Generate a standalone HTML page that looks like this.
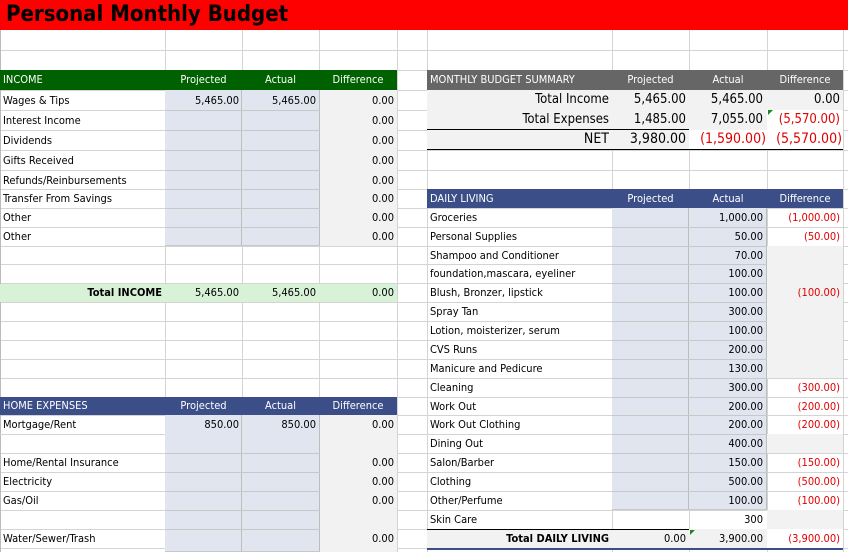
<!DOCTYPE html>
<html><head><meta charset="utf-8"><style>
body{margin:0;width:848px;height:552px;overflow:hidden;background:#fff;font-family:"DejaVu Sans Condensed","Liberation Sans",sans-serif;font-size:11px;color:#000;position:relative}
div{position:absolute;box-sizing:border-box}
.h{height:1px;background:#d4d4d4;left:0;width:848px}
.v{width:1px;background:#d4d4d4}
.t{white-space:nowrap;line-height:19px;height:19px;padding:0 3px}
.r{text-align:right}.c{text-align:center}
.w{color:#fff}
.red{color:#e00000}
.b{background:#e1e5f0;border-right:1px solid #bdbdbd;border-bottom:1px solid #c8c8c8}
.g{background:#f2f2f2}
</style></head><body>
<!-- grid lines -->
<div class="h" style="top:50px"></div><div class="h" style="top:70px"></div><div class="h" style="top:90px"></div><div class="h" style="top:110px"></div><div class="h" style="top:130px"></div><div class="h" style="top:150px"></div><div class="h" style="top:170px"></div><div class="h" style="top:189px"></div><div class="h" style="top:208px"></div><div class="h" style="top:227px"></div><div class="h" style="top:246px"></div><div class="h" style="top:264px"></div><div class="h" style="top:283px"></div><div class="h" style="top:302px"></div><div class="h" style="top:321px"></div><div class="h" style="top:340px"></div><div class="h" style="top:359px"></div><div class="h" style="top:378px"></div><div class="h" style="top:397px"></div><div class="h" style="top:415px"></div><div class="h" style="top:434px"></div><div class="h" style="top:453px"></div><div class="h" style="top:472px"></div><div class="h" style="top:491px"></div><div class="h" style="top:510px"></div><div class="h" style="top:529px"></div><div class="h" style="top:548px"></div>
<div class="v" style="left:0;top:30px;height:522px;background:#bbb"></div>
<div class="v" style="left:165px;top:30px;height:522px"></div><div class="v" style="left:242px;top:30px;height:522px"></div><div class="v" style="left:319px;top:30px;height:522px"></div><div class="v" style="left:397px;top:30px;height:522px"></div><div class="v" style="left:427px;top:30px;height:522px"></div><div class="v" style="left:612px;top:30px;height:522px"></div><div class="v" style="left:689px;top:30px;height:522px"></div><div class="v" style="left:767px;top:30px;height:522px"></div><div class="v" style="left:843px;top:30px;height:522px"></div>
<!-- title -->
<div style="left:0;top:0;width:848px;height:30px;background:#ff0000"></div>
<div style="left:6px;top:1px;font-size:22px;font-weight:bold;line-height:28px;white-space:nowrap">Personal Monthly Budget</div>

<!-- INCOME -->
<div style="left:0;top:70px;width:397px;height:20px;background:#006100"></div>
<div class="t w" style="left:0;top:70px">INCOME</div>
<div class="t w c" style="left:165px;top:70px;width:77px">Projected</div>
<div class="t w c" style="left:242px;top:70px;width:77px">Actual</div>
<div class="t w c" style="left:319px;top:70px;width:78px">Difference</div>
<div class="b" style="left:165px;top:90px;width:77px;height:156px"></div>
<div class="b" style="left:242px;top:90px;width:78px;height:156px"></div>
<div class="h" style="top:110px;left:165px;width:155px;background:#c8c8c8"></div><div class="h" style="top:130px;left:165px;width:155px;background:#c8c8c8"></div><div class="h" style="top:150px;left:165px;width:155px;background:#c8c8c8"></div><div class="h" style="top:170px;left:165px;width:155px;background:#c8c8c8"></div><div class="h" style="top:189px;left:165px;width:155px;background:#c8c8c8"></div><div class="h" style="top:208px;left:165px;width:155px;background:#c8c8c8"></div><div class="h" style="top:227px;left:165px;width:155px;background:#c8c8c8"></div>
<div class="g" style="left:320px;top:90px;width:77px;height:156px"></div>
<div class="t" style="left:0;top:91px">Wages &amp; Tips</div><div class="t r" style="left:165px;top:91px;width:77px">5,465.00</div><div class="t r" style="left:242px;top:91px;width:77px">5,465.00</div><div class="t r" style="left:320px;top:91px;width:77px">0.00</div>
<div class="t" style="left:0;top:111px">Interest Income</div><div class="t r" style="left:320px;top:111px;width:77px">0.00</div>
<div class="t" style="left:0;top:131px">Dividends</div><div class="t r" style="left:320px;top:131px;width:77px">0.00</div>
<div class="t" style="left:0;top:151px">Gifts Received</div><div class="t r" style="left:320px;top:151px;width:77px">0.00</div>
<div class="t" style="left:0;top:171px">Refunds/Reinbursements</div><div class="t r" style="left:320px;top:171px;width:77px">0.00</div>
<div class="t" style="left:0;top:189px">Transfer From Savings</div><div class="t r" style="left:320px;top:189px;width:77px">0.00</div>
<div class="t" style="left:0;top:208px">Other</div><div class="t r" style="left:320px;top:208px;width:77px">0.00</div>
<div class="t" style="left:0;top:227px">Other</div><div class="t r" style="left:320px;top:227px;width:77px">0.00</div>
<div style="left:0;top:284px;width:397px;height:18px;background:#d8f2d8"></div>
<div class="t r" style="left:0;top:283px;width:165px;font-weight:bold">Total INCOME</div>
<div class="t r" style="left:165px;top:283px;width:77px">5,465.00</div><div class="t r" style="left:242px;top:283px;width:77px">5,465.00</div><div class="t r" style="left:320px;top:283px;width:77px">0.00</div>

<!-- HOME -->
<div style="left:0;top:397px;width:397px;height:18px;background:#3b4e87"></div>
<div class="t w" style="left:0;top:397px;line-height:18px">HOME EXPENSES</div>
<div class="t w c" style="left:165px;top:397px;width:77px;line-height:18px">Projected</div>
<div class="t w c" style="left:242px;top:397px;width:77px;line-height:18px">Actual</div>
<div class="t w c" style="left:319px;top:397px;width:78px;line-height:18px">Difference</div>
<div class="b" style="left:165px;top:415px;width:77px;height:137px"></div>
<div class="b" style="left:242px;top:415px;width:78px;height:137px"></div>
<div class="h" style="top:434px;left:0;width:165px"></div>
<div class="h" style="top:453px;left:165px;width:155px;background:#c8c8c8"></div><div class="h" style="top:472px;left:165px;width:155px;background:#c8c8c8"></div><div class="h" style="top:491px;left:165px;width:155px;background:#c8c8c8"></div><div class="h" style="top:510px;left:165px;width:155px;background:#c8c8c8"></div><div class="h" style="top:529px;left:165px;width:155px;background:#c8c8c8"></div>
<div class="g" style="left:320px;top:415px;width:77px;height:137px"></div>
<div class="t" style="left:0;top:415px">Mortgage/Rent</div><div class="t r" style="left:165px;top:415px;width:77px">850.00</div><div class="t r" style="left:242px;top:415px;width:77px">850.00</div><div class="t r" style="left:320px;top:415px;width:77px">0.00</div>
<div class="t" style="left:0;top:453px">Home/Rental Insurance</div><div class="t r" style="left:320px;top:453px;width:77px">0.00</div>
<div class="t" style="left:0;top:472px">Electricity</div><div class="t r" style="left:320px;top:472px;width:77px">0.00</div>
<div class="t" style="left:0;top:491px">Gas/Oil</div><div class="t r" style="left:320px;top:491px;width:77px">0.00</div>
<div class="t" style="left:0;top:529px">Water/Sewer/Trash</div><div class="t r" style="left:320px;top:529px;width:77px">0.00</div>

<!-- SUMMARY -->
<div style="left:427px;top:70px;width:416px;height:20px;background:#666"></div>
<div class="t w" style="left:427px;top:70px">MONTHLY BUDGET SUMMARY</div>
<div class="t w c" style="left:612px;top:70px;width:77px">Projected</div>
<div class="t w c" style="left:689px;top:70px;width:78px">Actual</div>
<div class="t w c" style="left:767px;top:70px;width:76px">Difference</div>
<div class="g" style="left:427px;top:90px;width:416px;height:20px"></div>
<div class="g" style="left:427px;top:110px;width:340px;height:20px"></div>
<div style="left:767px;top:110px;width:76px;height:20px;background:#fff"></div>
<div class="g" style="left:427px;top:130px;width:262px;height:20px"></div>
<div style="left:689px;top:130px;width:154px;height:20px;background:#fff"></div>
<div style="left:427px;top:129px;width:262px;height:1px;background:#000"></div>
<div style="left:427px;top:149px;width:416px;height:1px;background:#000"></div>
<div style="left:768px;top:110px;width:0;height:0;border-top:5px solid #1a8a1a;border-right:5px solid transparent"></div>
<div class="t r" style="left:427px;top:90px;width:185px;font-size:13px;line-height:20px">Total Income</div>
<div class="t r" style="left:612px;top:90px;width:77px;font-size:13px;line-height:20px">5,465.00</div>
<div class="t r" style="left:689px;top:90px;width:77px;font-size:13px;line-height:20px">5,465.00</div>
<div class="t r" style="left:767px;top:90px;width:76px;font-size:13px;line-height:20px">0.00</div>
<div class="t r" style="left:427px;top:110px;width:185px;font-size:13px;line-height:20px">Total Expenses</div>
<div class="t r" style="left:612px;top:110px;width:77px;font-size:13px;line-height:20px">1,485.00</div>
<div class="t r" style="left:689px;top:110px;width:77px;font-size:13px;line-height:20px">7,055.00</div>
<div class="t r red" style="left:767px;top:110px;width:76px;font-size:13px;line-height:20px">(5,570.00)</div>
<div class="t r" style="left:427px;top:130px;width:185px;font-size:14px;line-height:19px">NET</div>
<div class="t r" style="left:612px;top:130px;width:77px;font-size:14px;line-height:19px">3,980.00</div>
<div class="t r red" style="left:689px;top:130px;width:78px;font-size:14px;line-height:19px;padding:0 1px">(1,590.00)</div>
<div class="t r red" style="left:767px;top:130px;width:76px;font-size:14px;line-height:19px;padding:0 1px">(5,570.00)</div>

<!-- DAILY -->
<div style="left:427px;top:189px;width:416px;height:19px;background:#3b4e87"></div>
<div class="t w" style="left:427px;top:189px">DAILY LIVING</div>
<div class="t w c" style="left:612px;top:189px;width:77px">Projected</div>
<div class="t w c" style="left:689px;top:189px;width:78px">Actual</div>
<div class="t w c" style="left:767px;top:189px;width:76px">Difference</div>
<div class="b" style="left:612px;top:208px;width:77px;height:302px"></div>
<div class="b" style="left:689px;top:208px;width:78px;height:302px"></div>
<div class="g" style="left:767px;top:246px;width:76px;height:132px"></div>
<div class="g" style="left:767px;top:434px;width:76px;height:19px"></div>
<div class="g" style="left:767px;top:510px;width:76px;height:19px"></div>
<div class="h" style="top:227px;left:612px;width:155px;background:#c8c8c8"></div><div class="h" style="top:246px;left:612px;width:155px;background:#c8c8c8"></div><div class="h" style="top:264px;left:612px;width:155px;background:#c8c8c8"></div><div class="h" style="top:283px;left:612px;width:155px;background:#c8c8c8"></div><div class="h" style="top:302px;left:612px;width:155px;background:#c8c8c8"></div><div class="h" style="top:321px;left:612px;width:155px;background:#c8c8c8"></div><div class="h" style="top:340px;left:612px;width:155px;background:#c8c8c8"></div><div class="h" style="top:359px;left:612px;width:155px;background:#c8c8c8"></div><div class="h" style="top:378px;left:612px;width:155px;background:#c8c8c8"></div><div class="h" style="top:397px;left:612px;width:155px;background:#c8c8c8"></div><div class="h" style="top:415px;left:612px;width:155px;background:#c8c8c8"></div><div class="h" style="top:434px;left:612px;width:155px;background:#c8c8c8"></div><div class="h" style="top:453px;left:612px;width:155px;background:#c8c8c8"></div><div class="h" style="top:472px;left:612px;width:155px;background:#c8c8c8"></div><div class="h" style="top:491px;left:612px;width:155px;background:#c8c8c8"></div>
<div class="g" style="left:427px;top:529px;width:416px;height:19px"></div>
<div style="left:767px;top:529px;width:76px;height:19px;background:#fff"></div>
<div style="left:427px;top:529px;width:262px;height:1px;background:#000"></div>
<div style="left:427px;top:548px;width:416px;height:2px;background:#3b4e87"></div>
<div style="left:690px;top:530px;width:0;height:0;border-top:5px solid #1a8a1a;border-right:5px solid transparent"></div>

<div class="t" style="left:427px;top:208px">Groceries</div><div class="t r" style="left:689px;top:208px;width:77px">1,000.00</div><div class="t r red" style="left:767px;top:208px;width:76px">(1,000.00)</div>
<div class="t" style="left:427px;top:227px">Personal Supplies</div><div class="t r" style="left:689px;top:227px;width:77px">50.00</div><div class="t r red" style="left:767px;top:227px;width:76px">(50.00)</div>
<div class="t" style="left:427px;top:246px">Shampoo and Conditioner</div><div class="t r" style="left:689px;top:246px;width:77px">70.00</div>
<div class="t" style="left:427px;top:264px">foundation,mascara, eyeliner</div><div class="t r" style="left:689px;top:264px;width:77px">100.00</div>
<div class="t" style="left:427px;top:283px">Blush, Bronzer, lipstick</div><div class="t r" style="left:689px;top:283px;width:77px">100.00</div><div class="t r red" style="left:767px;top:283px;width:76px">(100.00)</div>
<div class="t" style="left:427px;top:302px">Spray Tan</div><div class="t r" style="left:689px;top:302px;width:77px">300.00</div>
<div class="t" style="left:427px;top:321px">Lotion, moisterizer, serum</div><div class="t r" style="left:689px;top:321px;width:77px">100.00</div>
<div class="t" style="left:427px;top:340px">CVS Runs</div><div class="t r" style="left:689px;top:340px;width:77px">200.00</div>
<div class="t" style="left:427px;top:359px">Manicure and Pedicure</div><div class="t r" style="left:689px;top:359px;width:77px">130.00</div>
<div class="t" style="left:427px;top:378px">Cleaning</div><div class="t r" style="left:689px;top:378px;width:77px">300.00</div><div class="t r red" style="left:767px;top:378px;width:76px">(300.00)</div>
<div class="t" style="left:427px;top:397px">Work Out</div><div class="t r" style="left:689px;top:397px;width:77px">200.00</div><div class="t r red" style="left:767px;top:397px;width:76px">(200.00)</div>
<div class="t" style="left:427px;top:415px">Work Out Clothing</div><div class="t r" style="left:689px;top:415px;width:77px">200.00</div><div class="t r red" style="left:767px;top:415px;width:76px">(200.00)</div>
<div class="t" style="left:427px;top:434px">Dining Out</div><div class="t r" style="left:689px;top:434px;width:77px">400.00</div>
<div class="t" style="left:427px;top:453px">Salon/Barber</div><div class="t r" style="left:689px;top:453px;width:77px">150.00</div><div class="t r red" style="left:767px;top:453px;width:76px">(150.00)</div>
<div class="t" style="left:427px;top:472px">Clothing</div><div class="t r" style="left:689px;top:472px;width:77px">500.00</div><div class="t r red" style="left:767px;top:472px;width:76px">(500.00)</div>
<div class="t" style="left:427px;top:491px">Other/Perfume</div><div class="t r" style="left:689px;top:491px;width:77px">100.00</div><div class="t r red" style="left:767px;top:491px;width:76px">(100.00)</div>
<div class="t" style="left:427px;top:510px">Skin Care</div><div class="t r" style="left:689px;top:510px;width:77px">300</div>
<div class="t r" style="left:427px;top:529px;width:185px;font-weight:bold">Total DAILY LIVING</div>
<div class="t r" style="left:612px;top:529px;width:77px">0.00</div>
<div class="t r" style="left:689px;top:529px;width:77px">3,900.00</div>
<div class="t r red" style="left:767px;top:529px;width:76px">(3,900.00)</div>
</body></html>
